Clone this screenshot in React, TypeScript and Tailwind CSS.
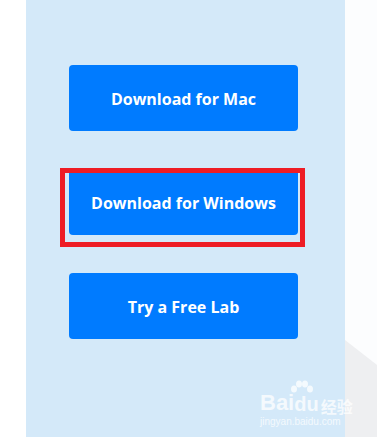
import React from 'react';

const buttons = ['Download for Mac', 'Download for Windows', 'Try a Free Lab'];

const App: React.FC = () => {
    return (
        <div className="relative w-[377px] h-[437px] bg-white flex overflow-hidden" style={{ fontFamily: '"Open Sans", "Noto Sans", sans-serif' }}>
            <div className="w-[26px] shrink-0 bg-white" />
            <div className="w-[319px] shrink-0 bg-[#d4e9f9] pt-[65px] pl-[43px] flex flex-col gap-[38px]">
                {buttons.map((label, i) => (
                    <div key={label} className="relative w-[229px]">
                        <button className="w-[229px] h-[66px] pt-[2px] rounded-[4px] bg-[#007bff] text-white text-[16px] font-bold leading-none">
                            {label}
                        </button>
                        {i === 1 && (
                            <div className="absolute left-[-9px] top-[-1px] w-[245px] h-[79px] border-[5px] border-[#ee1c25] pointer-events-none" />
                        )}
                    </div>
                ))}
            </div>
            <div className="relative flex-1 bg-[#fcfdfe]">
                <svg className="absolute left-0 top-0" width="32" height="437" viewBox="0 0 32 437">
                    <polygon points="0,340 32,365 32,437 0,437" fill="#eeeff1" />
                </svg>
            </div>
            {/* watermark */}
            <div className="absolute left-[260px] top-[392px] text-white/75 leading-none whitespace-nowrap">
                <div className="relative flex items-end">
                    <span className="text-[22px] font-bold" style={{ fontFamily: '"Liberation Sans", sans-serif' }}>Bai</span>
                    <span className="text-[20px] font-bold" style={{ fontFamily: '"Liberation Sans", sans-serif' }}>du</span>
                    <span className="text-[16px] font-bold ml-[2px]" style={{ fontFamily: '"Noto Sans CJK SC", sans-serif' }}>经验</span>
                    <svg className="absolute left-[29px] top-[-12px]" width="24" height="14" viewBox="0 0 24 14">
                        <ellipse cx="5" cy="9" rx="3" ry="3.5" fill="currentColor" />
                        <ellipse cx="10" cy="4" rx="3" ry="3.5" fill="currentColor" />
                        <ellipse cx="16" cy="4" rx="3" ry="3.5" fill="currentColor" />
                        <ellipse cx="21" cy="9" rx="3" ry="3.5" fill="currentColor" />
                    </svg>
                </div>
                <div className="text-[10px] mt-[3px]" style={{ fontFamily: '"Liberation Sans", sans-serif' }}>jingyan.baidu.com</div>
            </div>
        </div>
    );
};

export default App;
